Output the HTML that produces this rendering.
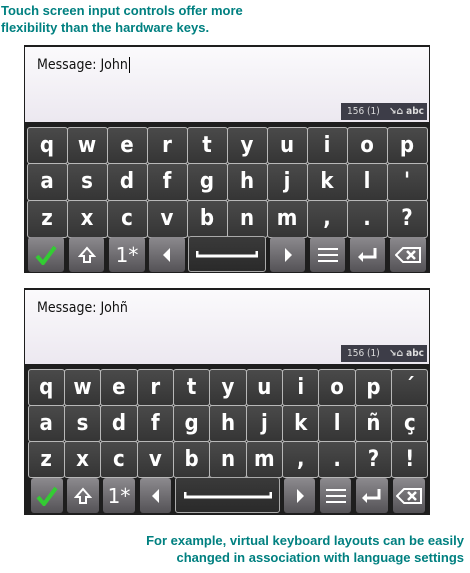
<!DOCTYPE html>
<html><head><meta charset="utf-8"><style>
*{margin:0;padding:0;box-sizing:border-box}
body{width:470px;height:573px;background:#fff;position:relative;overflow:hidden;font-family:"Liberation Sans",sans-serif}
.cap{position:absolute;color:#008080;font-weight:bold;font-size:13px;line-height:17px}
.scr{position:absolute;background:#1e1e1e}
.ta{position:absolute;background:linear-gradient(#fbfafc,#ece8f0);font-family:"DejaVu Sans Condensed","DejaVu Sans",sans-serif;font-size:14px;color:#111;padding:10px 0 0 12px}
.cnt{position:absolute;right:2px;bottom:2px;width:86px;height:17px;background:#3d3d48;color:#ddd;font-family:"DejaVu Sans Condensed",sans-serif;font-size:10px;line-height:17px;padding-left:6px}
.cnt b{position:absolute;right:3px;font-weight:bold}
.kb{position:absolute;display:grid}
.kb div{border:1px solid #b8b8b8;border-radius:3px;background:linear-gradient(#4a4a4a,#353535);color:#fff;font-family:"DejaVu Sans Condensed","DejaVu Sans",sans-serif;font-weight:bold;font-size:22px;display:flex;align-items:center;justify-content:center;margin:-0.5px}
.b{position:absolute;height:35px;border-radius:3px;background:linear-gradient(#8c8a8e,#545256);display:flex;align-items:center;justify-content:center;color:#fff}
.sp{background:linear-gradient(#3a3a3a,#2a2a2a);border:1px solid #aaa}
</style></head><body>
<div class="cap" style="left:1px;top:2px">Touch screen input controls offer more<br>flexibility than the hardware keys.</div>

<div class="scr" style="left:24px;top:45px;width:406px;height:228px"></div>
<div class="ta" style="left:25px;top:47px;width:404px;height:75px">Message: John<span style="border-left:1px solid #000;margin-left:1px"></span>
<div class="cnt">156 (1)<b>↘⌂ abc</b></div></div>
<div class="kb" style="left:27px;top:127px;width:400px;height:110px;grid-template-columns:repeat(10,1fr);grid-template-rows:repeat(3,1fr)">
<div>q</div><div>w</div><div>e</div><div>r</div><div>t</div><div>y</div><div>u</div><div>i</div><div>o</div><div>p</div>
<div>a</div><div>s</div><div>d</div><div>f</div><div>g</div><div>h</div><div>j</div><div>k</div><div>l</div><div>'</div>
<div>z</div><div>x</div><div>c</div><div>v</div><div>b</div><div>n</div><div>m</div><div>,</div><div>.</div><div>?</div>
</div>
<div class="b" style="left:28px;top:237px;width:36px"><svg width="22" height="20"><path d="M2 11 L8 18 L20 2" stroke="#3c3" stroke-width="4" fill="none"/></svg></div>
<div class="b" style="left:69px;top:237px;width:35px"><svg width="18" height="18"><path d="M9 2 L16 10 H12 V16 H6 V10 H2 Z" stroke="#fff" stroke-width="2" fill="none"/></svg></div>
<div class="b" style="left:109px;top:237px;width:36px;font-size:20px;font-family:'DejaVu Sans',sans-serif">1*</div>
<div class="b" style="left:149px;top:237px;width:36px"><svg width="10" height="14"><path d="M8 0 L1 7 L8 14Z" fill="#fff"/></svg></div>
<div class="b sp" style="left:188px;top:236px;width:78px;height:36px"><svg width="62" height="8"><path d="M1 1 V6 H61 V1" stroke="#fff" stroke-width="3" fill="none"/></svg></div>
<div class="b" style="left:270px;top:237px;width:35px"><svg width="10" height="14"><path d="M2 0 L9 7 L2 14Z" fill="#fff"/></svg></div>
<div class="b" style="left:310px;top:237px;width:35px"><svg width="20" height="16"><path d="M0 2H20M0 8H20M0 14H20" stroke="#fff" stroke-width="2"/></svg></div>
<div class="b" style="left:350px;top:237px;width:35px"><svg width="22" height="16"><path d="M18 1 V10 H5" stroke="#fff" stroke-width="3" fill="none"/><path d="M6 5 L1 10 L6 15Z" fill="#fff"/></svg></div>
<div class="b" style="left:390px;top:237px;width:36px"><svg width="26" height="16"><path d="M8 1 H25 V15 H8 L1 8 Z" stroke="#fff" stroke-width="2" fill="none"/><path d="M12 4 L20 12 M20 4 L12 12" stroke="#fff" stroke-width="2.5"/></svg></div>

<div class="scr" style="left:24px;top:288px;width:406px;height:227px"></div>
<div class="ta" style="left:25px;top:290px;width:404px;height:74px">Message: Johñ
<div class="cnt">156 (1)<b>↘⌂ abc</b></div></div>
<div class="kb" style="left:28px;top:369px;width:400px;height:109px;grid-template-columns:repeat(11,1fr);grid-template-rows:repeat(3,1fr)">
<div>q</div><div>w</div><div>e</div><div>r</div><div>t</div><div>y</div><div>u</div><div>i</div><div>o</div><div>p</div><div>´</div>
<div>a</div><div>s</div><div>d</div><div>f</div><div>g</div><div>h</div><div>j</div><div>k</div><div>l</div><div>ñ</div><div>ç</div>
<div>z</div><div>x</div><div>c</div><div>v</div><div>b</div><div>n</div><div>m</div><div>,</div><div>.</div><div>?</div><div>!</div>
</div>
<div class="b" style="left:31px;top:478px;width:32px"><svg width="22" height="20"><path d="M2 11 L8 18 L20 2" stroke="#3c3" stroke-width="4" fill="none"/></svg></div>
<div class="b" style="left:67px;top:478px;width:32px"><svg width="18" height="18"><path d="M9 2 L16 10 H12 V16 H6 V10 H2 Z" stroke="#fff" stroke-width="2" fill="none"/></svg></div>
<div class="b" style="left:103px;top:478px;width:32px;font-size:20px;font-family:'DejaVu Sans',sans-serif">1*</div>
<div class="b" style="left:140px;top:478px;width:31px"><svg width="10" height="14"><path d="M8 0 L1 7 L8 14Z" fill="#fff"/></svg></div>
<div class="b sp" style="left:175px;top:477px;width:105px;height:36px"><svg width="88" height="8"><path d="M1 1 V6 H87 V1" stroke="#fff" stroke-width="3" fill="none"/></svg></div>
<div class="b" style="left:284px;top:478px;width:31px"><svg width="10" height="14"><path d="M2 0 L9 7 L2 14Z" fill="#fff"/></svg></div>
<div class="b" style="left:320px;top:478px;width:31px"><svg width="20" height="16"><path d="M0 2H20M0 8H20M0 14H20" stroke="#fff" stroke-width="2"/></svg></div>
<div class="b" style="left:356px;top:478px;width:32px"><svg width="22" height="16"><path d="M18 1 V10 H5" stroke="#fff" stroke-width="3" fill="none"/><path d="M6 5 L1 10 L6 15Z" fill="#fff"/></svg></div>
<div class="b" style="left:393px;top:478px;width:32px"><svg width="26" height="16"><path d="M8 1 H25 V15 H8 L1 8 Z" stroke="#fff" stroke-width="2" fill="none"/><path d="M12 4 L20 12 M20 4 L12 12" stroke="#fff" stroke-width="2.5"/></svg></div>

<div class="cap" style="right:6px;top:532px;text-align:right">For example, virtual keyboard layouts can be easily<br>changed in association with language settings</div>
</body></html>
